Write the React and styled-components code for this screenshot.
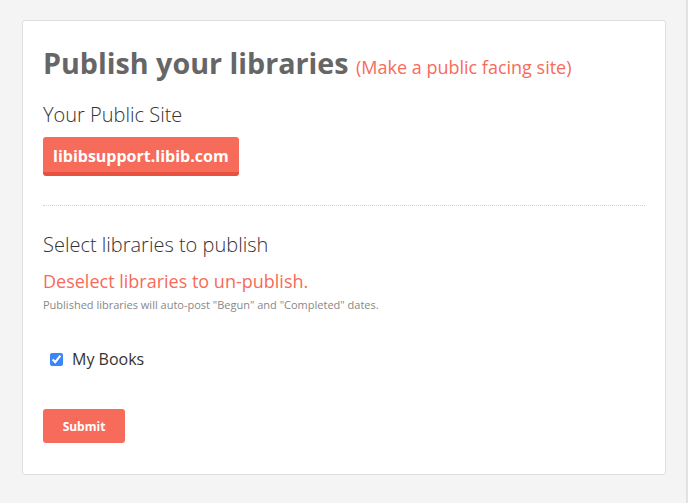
import React from "react";
import styled, { createGlobalStyle } from "styled-components";

const Global = createGlobalStyle`
  html, body {
    margin: 0;
    padding: 0;
    background: #f4f4f4;
    font-family: "Open Sans", "Liberation Sans", sans-serif;
  }
`;

const Page = styled.div`
  display: flex;
  align-items: flex-start;
  padding: 20px 20px 29px 22px;
  min-height: 503px;
  box-sizing: border-box;
  border-right: 2px solid #e2e2e2;
  width: 688px;
`;

const Card = styled.div`
  flex: 1;
  background: #fff;
  border: 1px solid #dedede;
  border-radius: 3px;
  padding: 24px 20px 31px 20px;
`;

const Title = styled.h1`
  margin: 0;
  font-size: 28.7px;
  font-weight: 700;
  color: #666;
  line-height: 36px;
  span {
    font-size: 18px;
    font-weight: 400;
    color: #f76b5a;
  }
`;

const Heading = styled.h2`
  margin: ${(p) => p.$top || 0}px 0 0 0;
  font-size: 20px;
  font-weight: 300;
  color: #333;
  line-height: 28px;
`;

const SiteButton = styled.div`
  display: inline-block;
  margin-top: 8px;
  background: #f76b5a;
  border-bottom: 4px solid #e8503f;
  border-radius: 3px;
  color: #fff;
  font-size: 16px;
  font-weight: 700;
  padding: 8px 10px 5px;
`;

const Divider = styled.hr`
  border: none;
  border-top: 1px dotted #d0d0d0;
  margin: 29px 0 25px;
`;

const Notice = styled.div`
  margin-top: 10px;
  font-size: 18px;
  color: #f76b5a;
  line-height: 24px;
`;

const Hint = styled.div`
  margin-top: 4px;
  font-size: 11px;
  color: #888;
`;

const CheckRow = styled.label`
  display: flex;
  align-items: center;
  gap: 9px;
  margin-top: 36px;
  padding-left: 7px;
  font-size: 16px;
  color: #333;
  input {
    margin: 0;
    width: 13px;
    height: 13px;
    accent-color: #3a86f7;
  }
`;

const Submit = styled.button`
  display: block;
  margin-top: 39px;
  background: #f76b5a;
  border: none;
  border-radius: 3px;
  color: #fff;
  font-family: inherit;
  font-size: 12px;
  font-weight: 700;
  width: 82px;
  height: 34px;
`;

export default function App() {
  return (
    <>
      <Global />
      <Page>
        <Card>
          <Title>
            Publish your libraries <span>(Make a public facing site)</span>
          </Title>
          <Heading $top={16}>Your Public Site</Heading>
          <SiteButton>libibsupport.libib.com</SiteButton>
          <Divider />
          <Heading>Select libraries to publish</Heading>
          <Notice>Deselect libraries to un-publish.</Notice>
          <Hint>Published libraries will auto-post "Begun" and "Completed" dates.</Hint>
          <CheckRow>
            <input type="checkbox" defaultChecked />
            My Books
          </CheckRow>
          <Submit>Submit</Submit>
        </Card>
      </Page>
    </>
  );
}
